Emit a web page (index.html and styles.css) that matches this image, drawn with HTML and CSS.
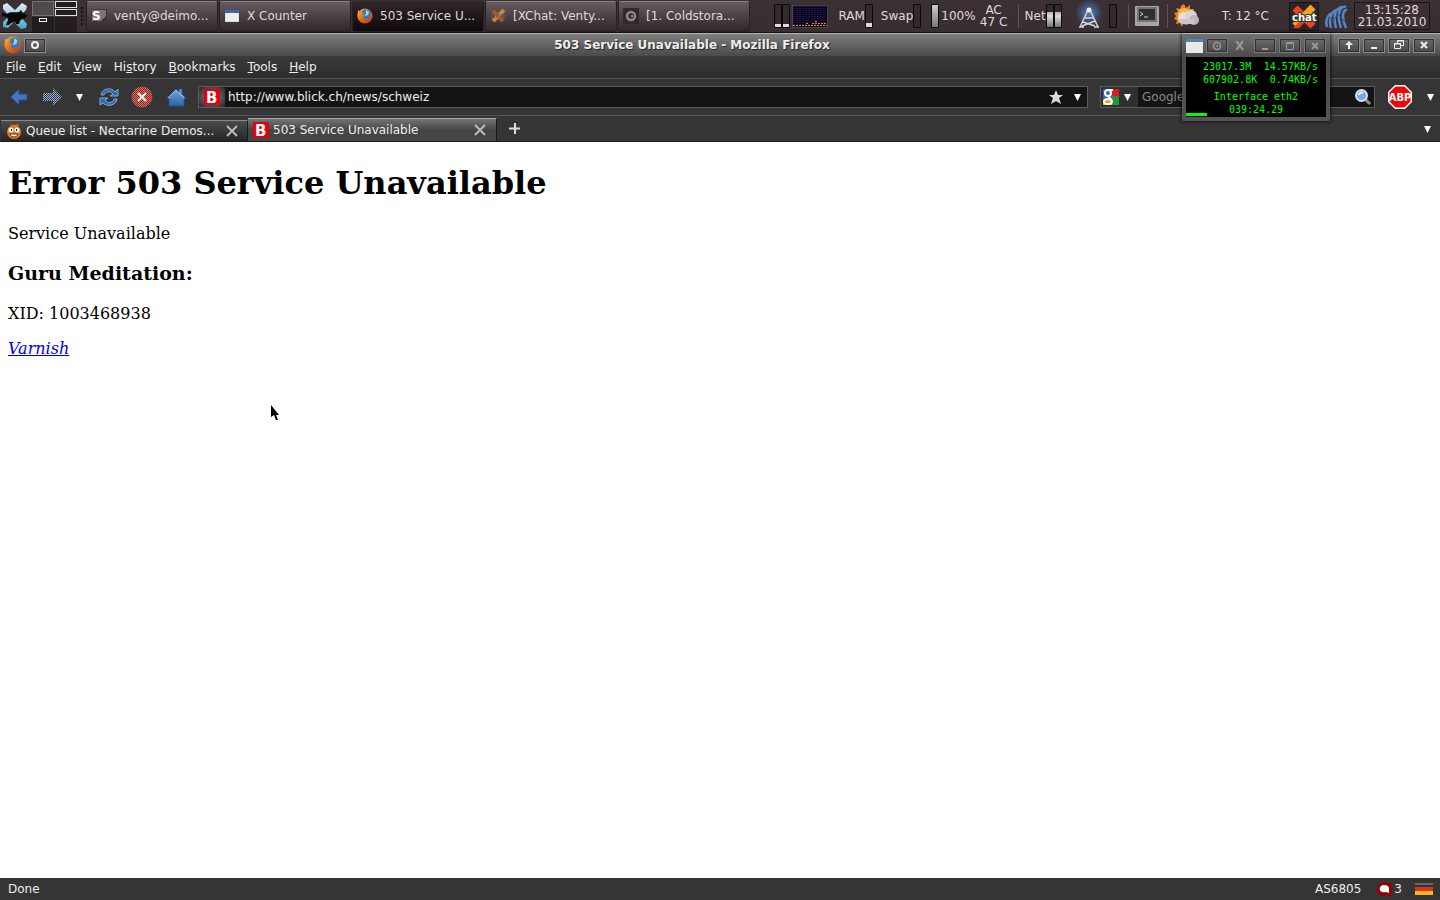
FILE: index.html
```html
<!DOCTYPE html>
<html lang="en">
<head>
    <meta charset="UTF-8">
    <meta name="viewport" content="width=device-width, initial-scale=1.0">
    <title>503 Service Unavailable</title>
    <link rel="stylesheet" href="styles.css">
</head>
<body>
    <!-- Desktop panel -->
    <header class="panel">
        <button class="start" aria-label="Applications">
            <svg width="30" height="33" viewBox="0 0 30 33">
                <defs>
                    <linearGradient id="xgrad" x1="0" y1="0" x2="0" y2="1"><stop offset="0" stop-color="#e4eff4"/><stop offset="1" stop-color="#3aa6c8"/></linearGradient>
                    <linearGradient id="blue" x1="0" y1="0" x2="0" y2="1"><stop offset="0" stop-color="#7ba4d4"/><stop offset="1" stop-color="#2c62a8"/></linearGradient>
                    <linearGradient id="fire" x1="0" y1="0" x2="1" y2="1"><stop offset="0" stop-color="#f9b233"/><stop offset="0.5" stop-color="#e66a17"/><stop offset="1" stop-color="#b83410"/></linearGradient>
                    <pattern id="checkblue" width="2" height="2" patternUnits="userSpaceOnUse"><path d="M0 0h1v1H0zM1 1h1v1H1z" fill="#8fb2dc"/></pattern>
                    <pattern id="checkred" width="2" height="2" patternUnits="userSpaceOnUse"><path d="M0 0h1v1H0zM1 1h1v1H1z" fill="#ef6a5c"/></pattern>
                </defs>
                <path d="M3 5l4-2 8 7 7-7 5 3-1 4-6 6 7 8-1 4-5 1-7-7-6 6-5-1v-5l6-6-6-7z" fill="url(#xgrad)"/>
                <path d="M2 13l5 1c3-3 9-1 12-2l2-2 1 2 4 3 2 1-3 2c-2 1-4 1-5 3l-1 3h-3l-1-2-4 1-2 2H6l2-5-1-3-5-1z" fill="#070708"/>
            </svg>
        </button>
        <div class="pager">
            <div class="desk active"><i class="mini"></i></div>
            <div class="desk lit"><i class="bar"></i><i class="bar"></i></div>
            <div class="desk"><i class="mini"></i></div>
            <div class="desk"></div>
        </div>
        <span class="grip"></span>
        <nav class="tasks">
            <button class="task">
                <svg class="icon" viewBox="0 0 16 16"><path d="M0 1h16v13H0z" fill="#3c3839"/><path d="M1 2h14v11H1z" fill="#78757a"/><path d="M10 13l5-5v5z" fill="#333"/><text x="1" y="12" font-size="12" font-weight="bold" fill="#fff">S</text></svg>
                venty@deimo...
            </button>
            <button class="task">
                <svg class="icon" viewBox="0 0 16 16"><path d="M1 2h14v12H1z" fill="#ddd"/><path d="M1 2h14v3H1z" fill="#3765ae"/><path d="M2 5h12v8H2z" fill="#eee"/></svg>
                X Counter
            </button>
            <button class="task current">
                <svg class="icon" viewBox="0 0 16 16"><circle cx="8" cy="8" r="7.5" fill="url(#fire)"/><circle cx="9" cy="6.5" r="5" fill="#2d7cc4"/><path d="M9 2l3 2-1 3-3 1 1-3z" fill="#a7d7ef"/><path d="M1 2l2 2 3 0-1 2 3 1-2 2c1 3 5 3 7 0l1-5 1.500 4c0 4-3 6.500-7 6.500S.5 12 .5 8z" fill="url(#fire)"/></svg>
                503 Service U...
            </button>
            <button class="task">
                <svg class="icon" viewBox="0 0 16 16"><path d="M3 3l10 10" stroke="#b4502a" stroke-width="4"/><path d="M14 2L3 13" stroke="#c18a35" stroke-width="4"/><text x="1" y="10" font-size="7" font-weight="bold" fill="#665960">chat</text></svg>
                [XChat: Venty...
            </button>
            <button class="task">
                <svg class="icon" viewBox="0 0 16 16"><path d="M0 0h16v16H0z" fill="#302a2e"/><circle cx="8" cy="8" r="4" fill="none" stroke="#8d878b" stroke-width="2.500"/><path d="M8 7h2v2H8z" fill="#888"/></svg>
                [1. Coldstora...
            </button>
        </nav>
        <div class="tray">
            <div class="meters"><i class="meter low"></i><i class="meter low"></i></div>
            <svg class="graph" width="36" height="23" viewBox="0 0 36 23">
                <defs><pattern id="dots" width="3" height="2" patternUnits="userSpaceOnUse"><path d="M1 1h2v1H1z" fill="#21125a"/></pattern></defs>
                <path d="M0 0h36v23H0z" fill="#4a4045"/><path d="M1 1h34v21H1z" fill="#080515"/><path d="M1 1h33v19H1z" fill="url(#dots)"/>
                <path d="M1 20.500h34" stroke="#e38e12" stroke-dasharray="2 1"/><path d="M14 18.500h2M20 18.500h2M23 18.500h11M23 16.500h2" stroke="#e38e12" stroke-dasharray="2 1"/>
            </svg>
            <div class="reading ram"><span>RAM</span><i class="meter mid"></i></div>
            <div class="reading swap"><span>Swap</span><i class="meter"></i></div>
            <div class="reading power"><i class="meter full"></i><span>100%</span></div>
            <div class="stack">AC<br>47 C</div>
            <span class="sep"></span>
            <div class="reading net"><span>Net</span><i class="meter high"></i><i class="meter high"></i></div>
            <svg class="antenna" width="30" height="32" viewBox="0 0 30 32">
                <defs><radialGradient id="glow"><stop offset="0" stop-color="#567eb5"/><stop offset="0.6" stop-color="#3c4f70"/><stop offset="1" stop-color="#392f34"/></radialGradient></defs>
                <circle cx="15" cy="13" r="14" fill="url(#glow)"/>
                <path d="M14 10L6 27M16 10l8 17M11 18h8M9 22l12 4M21 21L8 26M5 27h5M20 27h5" stroke="#d8d5d3" stroke-width="1.500" fill="none"/><circle cx="15" cy="10" r="2.500" fill="#eee"/>
            </svg>
            <i class="meter"></i>
            <span class="sep"></span>
            <svg width="24" height="21" viewBox="0 0 24 21"><rect width="24" height="20" rx="1" fill="#a8a6a4"/><rect x="2" y="1" width="20" height="15" fill="#737372"/><rect x="4" y="3" width="16" height="11" fill="#2e3030"/><path d="M5 6l3 2-3 2M9 11h4" stroke="#ccc" fill="none"/><path d="M2 18h3" stroke="#65b94b"/></svg>
            <span class="sep"></span>
            <svg class="weather" width="26" height="25" viewBox="0 0 26 25"><path d="M10 0l2 4 4-3 0 4 4 0-2 4 2 5-7 7-4-1-1 3-2-4-4 1 1-4-3-1 2-3-2-3 4-1-2-4 4 1 1-3z" fill="#e8852b"/><circle cx="10" cy="10" r="6" fill="#fbb53c"/><circle cx="10" cy="14" r="6" fill="#e2dfe0"/><circle cx="17" cy="12" r="6" fill="#d8d5d8"/><circle cx="20" cy="16" r="5" fill="#bcb8bc"/><path d="M5 15h15v5H8z" fill="#c9c5c8"/></svg>
            <span class="temp">T: 12 °C</span>
            <button class="xchat" aria-label="XChat">
                <svg width="28" height="27" viewBox="0 0 28 27"><path d="M5 5l18 18" stroke="#ee421b" stroke-width="7"/><path d="M23 4L5 23" stroke="#f6a31d" stroke-width="7"/><path d="M3 25l8-8 3 3-5 5z" fill="#e63e18"/><text x="2" y="18" font-size="10" font-weight="bold" fill="#fff" stroke="#333" stroke-width="2" paint-order="stroke">chat</text></svg>
            </button>
            <svg class="shell" width="24" height="26" viewBox="0 0 24 26"><path d="M2 24C0 17 3 11 8 10M6 25C3 13 8 7 13 7M11 25C7 10 12 4 18 4M16 25C11 12 15 2 21 4M21 25C16 14 18 6 22 7" fill="none" stroke="#5386c4" stroke-width="2.500"/><path d="M3 14l6 2 4-5 8 9" fill="none" stroke="#354d77"/></svg>
            <time class="clock">13:15:28<br>21.03.2010</time>
        </div>
    </header>

    <!-- Browser window -->
    <div class="titlebar">
        <div class="title-left">
            <svg width="18" height="18" viewBox="0 0 16 16"><circle cx="8" cy="8" r="7.500" fill="url(#fire)"/><circle cx="9" cy="6.500" r="5" fill="#2d7cc4"/><path d="M9 2l3 2-1 3-3 1 1-3z" fill="#a7d7ef"/><path d="M1 2l2 2 3 0-1 2 3 1-2 2c1 3 5 3 7 0l1-5 1.500 4c0 4-3 6.500-7 6.500S.5 12 .5 8z" fill="url(#fire)"/></svg>
            <button class="winbtn" aria-label="Stick"><svg width="10" height="10" viewBox="0 0 10 10"><circle cx="5" cy="5" r="3" fill="none" stroke="#eee" stroke-width="2"/></svg></button>
        </div>
        <div class="window-title">503 Service Unavailable - Mozilla Firefox</div>
        <div class="winbtns">
            <button class="winbtn" aria-label="Shade"><svg width="10" height="10" viewBox="0 0 10 10"><path d="M5 1l4 4H6v4H4V5H1z" fill="#eee"/></svg></button>
            <button class="winbtn" aria-label="Minimize"><svg width="10" height="10" viewBox="0 0 10 10"><path d="M2 7h6v2H2z" fill="#eee"/></svg></button>
            <button class="winbtn" aria-label="Restore"><svg width="10" height="10" viewBox="0 0 10 10"><path d="M3.500 3V.5h6v5H7M.5 3.500h6v5h-6zM3 1h7M0 4h7" fill="none" stroke="#eee"/></svg></button>
            <button class="winbtn" aria-label="Close"><svg width="10" height="10" viewBox="0 0 10 10"><path d="M2 2l6 6M8 2L2 8" stroke="#eee" stroke-width="2"/></svg></button>
        </div>
    </div>

    <nav class="menubar">
        <button><u>F</u>ile</button>
        <button><u>E</u>dit</button>
        <button><u>V</u>iew</button>
        <button>Hi<u>s</u>tory</button>
        <button><u>B</u>ookmarks</button>
        <button><u>T</u>ools</button>
        <button><u>H</u>elp</button>
    </nav>

    <div class="toolbar">
        <button class="tool" aria-label="Back"><svg width="20" height="20" viewBox="0 0 20 20"><path d="M1.500 10L10 2v5h8v6h-8v5z" fill="#4578b8" stroke="#1f4f8f"/></svg></button>
        <button class="tool" aria-label="Forward"><svg width="20" height="20" viewBox="0 0 20 20"><path d="M20 10L11 1v5H1v8h10v5z" fill="url(#checkblue)"/></svg></button>
        <button class="tool small" aria-label="Recent pages"><svg width="8" height="8" viewBox="0 0 8 8"><path d="M0 1h7L3.500 8z" fill="#fff"/></svg></button>
        <button class="tool" aria-label="Reload"><svg width="20" height="20" viewBox="0 0 20 20"><path d="M2 8c1-7 11-8 14-3l3-3v7h-8l3-2c-3-4-8-2-9 1zM18 12c-1 7-10 8-14 4l-3 2v-7h8l-3 2c2 4 8 3 9-1z" fill="#3268ad" stroke="#82a8d8"/></svg></button>
        <button class="tool" aria-label="Stop"><svg width="22" height="22" viewBox="0 0 22 22"><circle cx="11" cy="11" r="10" fill="#703030"/><circle cx="11" cy="11" r="10.500" fill="url(#checkred)"/><path d="M7 7l8 8M15 7l-8 8" stroke="#eee" stroke-width="2"/></svg></button>
        <button class="tool" aria-label="Home"><svg width="20" height="20" viewBox="0 0 20 20"><path d="M1 11l9-9 3 3V2h3v5l4 4-2 1v7H3v-7z" fill="url(#blue)" stroke="#20579d"/><path d="M2 11l8-8 8 8" fill="none" stroke="#a0c1e5"/></svg></button>
        <div class="address">
            <span class="site"><svg width="16" height="16" viewBox="0 0 16 16"><path d="M0 0h16v16H0z" fill="#e2000f"/><text x="2" y="14" font-size="15" font-weight="bold" fill="#fff">B</text></svg></span>
            <input type="text" aria-label="Address" value="http://www.blick.ch/news/schweiz">
            <svg width="14" height="14" viewBox="0 0 14 14"><path d="M7 0l2 5h5l-4 3 2 6-5-3-5 3 2-6-4-3h5z" fill="#ddd"/></svg>
            <svg width="8" height="8" viewBox="0 0 8 8"><path d="M0 1h7L3.500 8z" fill="#fff"/></svg>
        </div>
        <div class="search">
            <span class="engine">
                <svg width="16" height="16" viewBox="0 0 16 16"><path d="M0 0h16v16H0z" fill="#3064ba"/><path d="M7 0h9v7H7z" fill="#d81c22"/><path d="M9 7h7v9H9z" fill="#229743"/><path d="M0 11h9v5H0z" fill="#eda915"/><circle cx="5" cy="4" r="3" fill="none" stroke="#fff" stroke-width="2"/><ellipse cx="5" cy="12.500" rx="4" ry="2.500" fill="none" stroke="#fff" stroke-width="2"/><path d="M5 7l3 3M6 1h4" stroke="#fff" stroke-width="2"/></svg>
                <svg width="8" height="8" viewBox="0 0 8 8"><path d="M0 1h7L3.500 8z" fill="#fff"/></svg>
            </span>
            <input type="text" aria-label="Search" placeholder="Google">
            <svg width="18" height="18" viewBox="0 0 18 18"><path d="M11 11l5 5" stroke="#8d8d86" stroke-width="3"/><circle cx="7.500" cy="7.500" r="5.500" fill="#75a7e5" stroke="#d5dfe9" stroke-width="2"/><path d="M5 7c0-2 2-3 4-2" stroke="#e7f4ff" fill="none" stroke-width="2"/></svg>
        </div>
        <button class="tool" aria-label="Adblock Plus"><svg width="26" height="26" viewBox="0 0 26 26"><path d="M8 1h10l7 7v10l-7 7H8l-7-7V8z" fill="#fff"/><path d="M8.500 2.500h9l6 6v9l-6 6h-9l-6-6v-9z" fill="#ec0808"/><text x="13" y="17" text-anchor="middle" font-size="10" font-weight="bold" fill="#fff">ABP</text></svg></button>
        <button class="tool small" aria-label="Adblock menu"><svg width="8" height="8" viewBox="0 0 8 8"><path d="M0 1h7L3.500 8z" fill="#fff"/></svg></button>
    </div>

    <div class="tabs">
        <div class="tab">
            <svg width="16" height="16" viewBox="0 0 16 16"><path d="M3 1l5 1 6-1-4 3z" fill="#9a9344"/><circle cx="8" cy="9" r="7" fill="#e77a14"/><circle cx="5" cy="7" r="2.500" fill="#fff"/><circle cx="11" cy="7" r="2.500" fill="#fff"/><path d="M5 6h1v2H5zM10 6h1v2h-1z" fill="#111"/><path d="M4 11h8c-1 4-7 4-8 0" fill="#fff" stroke="#55280a"/></svg>
            <span>Queue list - Nectarine Demos...</span>
            <button aria-label="Close tab"><svg width="12" height="12" viewBox="0 0 12 12"><path d="M1 1l10 10M11 1L1 11" stroke="#bbb" stroke-width="2"/></svg></button>
        </div>
        <div class="tab selected">
            <svg width="16" height="16" viewBox="0 0 16 16"><path d="M0 0h16v16H0z" fill="#e2000f"/><text x="2" y="14" font-size="15" font-weight="bold" fill="#fff">B</text></svg>
            <span>503 Service Unavailable</span>
            <button aria-label="Close tab"><svg width="12" height="12" viewBox="0 0 12 12"><path d="M1 1l10 10M11 1L1 11" stroke="#bbb" stroke-width="2"/></svg></button>
        </div>
        <button class="newtab" aria-label="New tab"><svg width="12" height="12" viewBox="0 0 12 12"><path d="M6 0v11M0 5.500h11" stroke="#ddd" stroke-width="2"/></svg></button>
        <button class="alltabs" aria-label="List all tabs"><svg width="8" height="8" viewBox="0 0 8 8"><path d="M0 1h7L3.500 8z" fill="#fff"/></svg></button>
    </div>

    <main class="page">
        <h1>Error 503 Service Unavailable</h1>
        <p>Service Unavailable</p>
        <h3>Guru Meditation:</h3>
        <p>XID: 1003468938</p>
        <address><a href="#">Varnish</a></address>
    </main>

    <footer class="statusbar">
        <span class="status">Done</span>
        <span>AS6805</span>
        <span class="comments"><svg width="16" height="16" viewBox="0 0 16 16"><path d="M8 1c9 0 9 9 6 11l1 4-5-2C2 16 0 12 0 8c0-4 3-7 8-7z" fill="#920006"/><path d="M7 4c5 0 5 3 5 5v3L9 11C1 13 1 4 7 4z" fill="#fff"/></svg>3</span>
        <svg class="flag" width="18" height="12" viewBox="0 0 18 12"><path d="M0 0h18v4H0z" fill="#333"/><path d="M0 4h18v4H0z" fill="#d9331e"/><path d="M0 8h18v4H0z" fill="#f5b81c"/><path d="M0 0h18v2H0z" fill="#666"/></svg>
    </footer>

    <!-- Traffic counter floating above the browser -->
    <section class="counter">
        <div class="counter-title">
            <svg width="17" height="14" viewBox="0 0 17 14"><path d="M0 0h17v14H0z" fill="#e9e9e5"/><path d="M0 0h17v3H0z" fill="#5582bb"/></svg>
            <button class="winbtn dim" aria-label="Stick"><svg width="10" height="10" viewBox="0 0 10 10"><circle cx="5" cy="5" r="3.500" fill="none" stroke="#999" stroke-width="1.500"/><circle cx="5" cy="5" r="1" fill="#999"/></svg></button>
            <span class="counter-name">X</span>
            <div class="winbtns">
                <button class="winbtn dim" aria-label="Minimize"><svg width="10" height="10" viewBox="0 0 10 10"><path d="M2 7h6v2H2z" fill="#999"/></svg></button>
                <button class="winbtn dim" aria-label="Maximize"><svg width="10" height="10" viewBox="0 0 10 10"><path d="M1.500 1.500h7v7h-7zM1 2.500h8" fill="none" stroke="#999"/></svg></button>
                <button class="winbtn dim" aria-label="Close"><svg width="10" height="10" viewBox="0 0 10 10"><path d="M2 2l6 6M8 2L2 8" stroke="#999" stroke-width="2"/></svg></button>
            </div>
        </div>
        <div class="counter-body">
            <div class="rates"><span>23017.3M</span><span>14.57KB/s</span></div>
            <div class="rates"><span>607902.8K</span><span>0.74KB/s</span></div>
            <div class="iface">Interface eth2</div>
            <div class="uptime">039:24.29</div>
            <div class="load"></div>
        </div>
    </section>

    <svg class="pointer" width="9" height="16" viewBox="0 0 9 16"><path d="M0 0v12l3-2 2 5h2l-2-5h3z" fill="#000"/></svg>
</body>
</html>
```

FILE: styles.css
```css
* {
    box-sizing: border-box;
}

body {
    margin: 0;
    min-height: 100vh;
    display: flex;
    flex-direction: column;
    position: relative;
    background: #fff;
    color: #eee;
    font-family: "DejaVu Sans", sans-serif;
    font-size: 12px;
    line-height: 16px;
}

button,
input {
    margin: 0;
    padding: 0;
    border: none;
    background: none;
    color: inherit;
    font: inherit;
}

svg {
    display: block;
    flex-shrink: 0;
}

/* Desktop panel */
.panel {
    height: 33px;
    display: flex;
    align-items: center;
    background: linear-gradient(#3b3034, #382e32);
    border-bottom: 1px solid #151213;
    color: #e0d8db;
    white-space: nowrap;
}

.pager {
    display: grid;
    grid-template-columns: 22px 22px;
    grid-template-rows: 15px 15px;
    gap: 1px;
    margin-left: 2px;
}

.desk {
    background: #241d20;
    display: flex;
    flex-direction: column;
    align-items: center;
    gap: 1px;
}

.desk.active {
    background: #514a4d;
    border: 1px solid #797174;
}

.desk .mini {
    width: 8px;
    height: 4px;
    margin-top: 1px;
    border: 1px solid #eee;
}

.desk.active .mini {
    display: none;
}

.desk .bar {
    width: 22px;
    height: 7px;
    border: 1px solid #ddd;
}

.grip {
    width: 3px;
    height: 18px;
    margin: 0 2px 0 4px;
    border-left: 2px dotted #17130f;
}

.tasks {
    display: flex;
    gap: 1px;
}

.task {
    width: 132px;
    height: 31px;
    display: flex;
    align-items: center;
    gap: 7px;
    padding: 0 4px;
    border: 1px solid #282123;
    border-top-color: #8a8286;
    border-radius: 3px;
    background: linear-gradient(#665c61, #4b4145 50%, #302729);
}

.task.current {
    background: linear-gradient(#30282a, #0d0809);
    border-top-color: #332a2d;
}

.task .icon {
    width: 16px;
    height: 16px;
}

.tray {
    flex: 1;
    display: flex;
    align-items: center;
    justify-content: flex-end;
    padding-right: 10px;
}

.meters,
.reading {
    display: flex;
    align-items: center;
}

.meter {
    width: 8px;
    height: 24px;
    border: 1px solid #0c090a;
    border-radius: 1px;
    background: #332a2d;
}

.meter.low {
    background: linear-gradient(#332a2d 85%, #ddd 85%);
}

.meter.mid {
    background: linear-gradient(#332a2d 80%, #ddd 80%);
}

.meter.high {
    background: linear-gradient(#332a2d 30%, #aaa 30%, #ddd 50%, #777);
}

.meter.full {
    background: linear-gradient(#ccc, #777);
}

.graph {
    margin: 0 10px 0 2px;
}

.swap {
    margin: 0 10px 0 8px;
}

.stack {
    width: 36px;
    text-align: center;
    line-height: 12px;
}

.power .meter {
    margin-right: 2px;
}

.sep {
    width: 1px;
    height: 24px;
    margin: 0 6px;
    background: #5e5458;
}

.antenna {
    margin: 0 5px 0 12px;
}

.tray > .meter + .sep {
    margin-left: 11px;
}

.tray > svg + .sep {
    margin-left: 8px;
}

.temp {
    margin: 0 20px 0 22px;
}

.xchat {
    width: 30px;
    height: 29px;
    border: 1px solid #191416;
    background: #2c2326;
}

.shell {
    margin: 0 5px 0 6px;
}

.clock {
    width: 76px;
    padding: 1px 0;
    border: 1px solid #191416;
    text-align: center;
    line-height: 12px;
}

/* Window frame */
.titlebar {
    height: 23px;
    display: flex;
    align-items: center;
    padding: 0 5px 0 4px;
    border-top: 1px solid #b5b5b5;
    background: linear-gradient(#7e7e7e, #4a4a4a);
}

.title-left {
    display: flex;
    align-items: center;
    gap: 2px;
}

.window-title {
    flex: 1;
    text-align: center;
    font-weight: bold;
    text-shadow: 1px 1px 1px #222;
}

.winbtns {
    display: flex;
    gap: 3px;
}

.winbtn {
    width: 22px;
    height: 15px;
    display: flex;
    align-items: center;
    justify-content: center;
    border: 1px solid #8b8b8b;
    outline: 1px solid #303030;
    outline-offset: -2px;
    background: linear-gradient(#6a6a6a, #484848);
}

.menubar {
    height: 23px;
    display: flex;
    align-items: center;
    gap: 12px;
    padding: 0 6px;
    border-bottom: 1px solid #555;
    background: linear-gradient(#3a3a3a, #2d2d2d);
}

.toolbar {
    height: 37px;
    display: flex;
    align-items: center;
    gap: 12px;
    padding: 0 3px 0 8px;
    border-bottom: 1px solid #555;
    background: #353535;
}

.tool {
    display: flex;
    justify-content: center;
    min-width: 21px;
}

.tool.small {
    min-width: 12px;
}

.address,
.search {
    height: 22px;
    display: flex;
    align-items: center;
    border: 1px solid #5c5c5c;
    background: #141414;
}

.address {
    flex: 1;
    gap: 11px;
    padding-right: 5px;
}

.address input {
    flex: 1;
}

.address input,
.search input {
    min-width: 0;
    outline: none;
}

.site {
    display: flex;
    align-items: center;
    justify-content: center;
    width: 26px;
    height: 20px;
    margin-right: -8px;
    background: radial-gradient(#888, #252525);
}

.search {
    width: 275px;
    padding-right: 2px;
}

.engine {
    display: flex;
    align-items: center;
    gap: 5px;
    height: 20px;
    padding: 0 6px 0 2px;
    background: #303030;
}

.search input {
    flex: 1;
    padding-left: 4px;
}

.search input::placeholder {
    color: #888;
    opacity: 1;
}

.tabs {
    height: 26px;
    display: flex;
    align-items: flex-end;
    padding: 0 8px 0 1px;
    background: #353535;
    border-bottom: 1px solid #1c1c1c;
}

.tab {
    width: 247px;
    height: 21px;
    display: flex;
    align-items: center;
    gap: 4px;
    padding: 0 9px 0 5px;
    border-top: 1px solid #888;
    border-right: 1px solid #181818;
    background: linear-gradient(#4c4c4c, #242424);
    white-space: nowrap;
}

.tab.selected {
    width: 249px;
    height: 23px;
    padding-right: 10px;
    border-top-color: #aaa;
    background: linear-gradient(#747474, #454545 50%);
}

.tab span {
    flex: 1;
}

.newtab {
    padding: 0 0 6px 12px;
}

.alltabs {
    margin-left: auto;
    padding-bottom: 8px;
}

/* Error document */
.page {
    flex: 1;
    padding: 0 8px;
    color: #000;
    font-family: "DejaVu Serif", serif;
    font-size: 16px;
    line-height: 19px;
}

.page h1 {
    margin: 22px 0;
    font-size: 32px;
    line-height: 38px;
}

.page p {
    margin: 0 0 16px;
}

.page h3 {
    margin: 19px 0;
    font-size: 19px;
    line-height: 23px;
}

.page a {
    color: #0000ee;
}

.statusbar {
    height: 22px;
    display: flex;
    align-items: center;
    gap: 16px;
    padding: 0 7px 0 8px;
    background: #353535;
}

.status {
    flex: 1;
}

.comments {
    display: flex;
    gap: 1px;
    margin-right: -3px;
}

/* Traffic counter window */
.counter {
    position: absolute;
    top: 33px;
    right: 110px;
    width: 148px;
    padding: 0 4px 4px;
    border-top: 1px solid #bbb;
    border-radius: 2px;
    background: linear-gradient(#707070, #4a4a4a 24px, #555);
    box-shadow: 0 0 4px #000;
}

.counter-title {
    height: 23px;
    display: flex;
    align-items: center;
    gap: 3px;
}

.counter-name {
    flex: 1;
    padding-left: 4px;
    color: #999;
    font-weight: bold;
}

.counter-title .winbtn.dim {
    border-color: #777;
}

.counter-body {
    height: 60px;
    padding: 3px 8px 0;
    position: relative;
    background: #000;
    color: #00ff00;
    font-family: "DejaVu Sans Mono", monospace;
    font-size: 10px;
    line-height: 13px;
    text-align: center;
}

.rates {
    display: flex;
    justify-content: space-between;
    padding-left: 9px;
}

.iface {
    margin-top: 4px;
}

.load {
    position: absolute;
    left: 0;
    bottom: 1px;
    width: 21px;
    height: 3px;
    background: #00ff00;
}

.pointer {
    position: absolute;
    top: 405px;
    left: 271px;
}
```
